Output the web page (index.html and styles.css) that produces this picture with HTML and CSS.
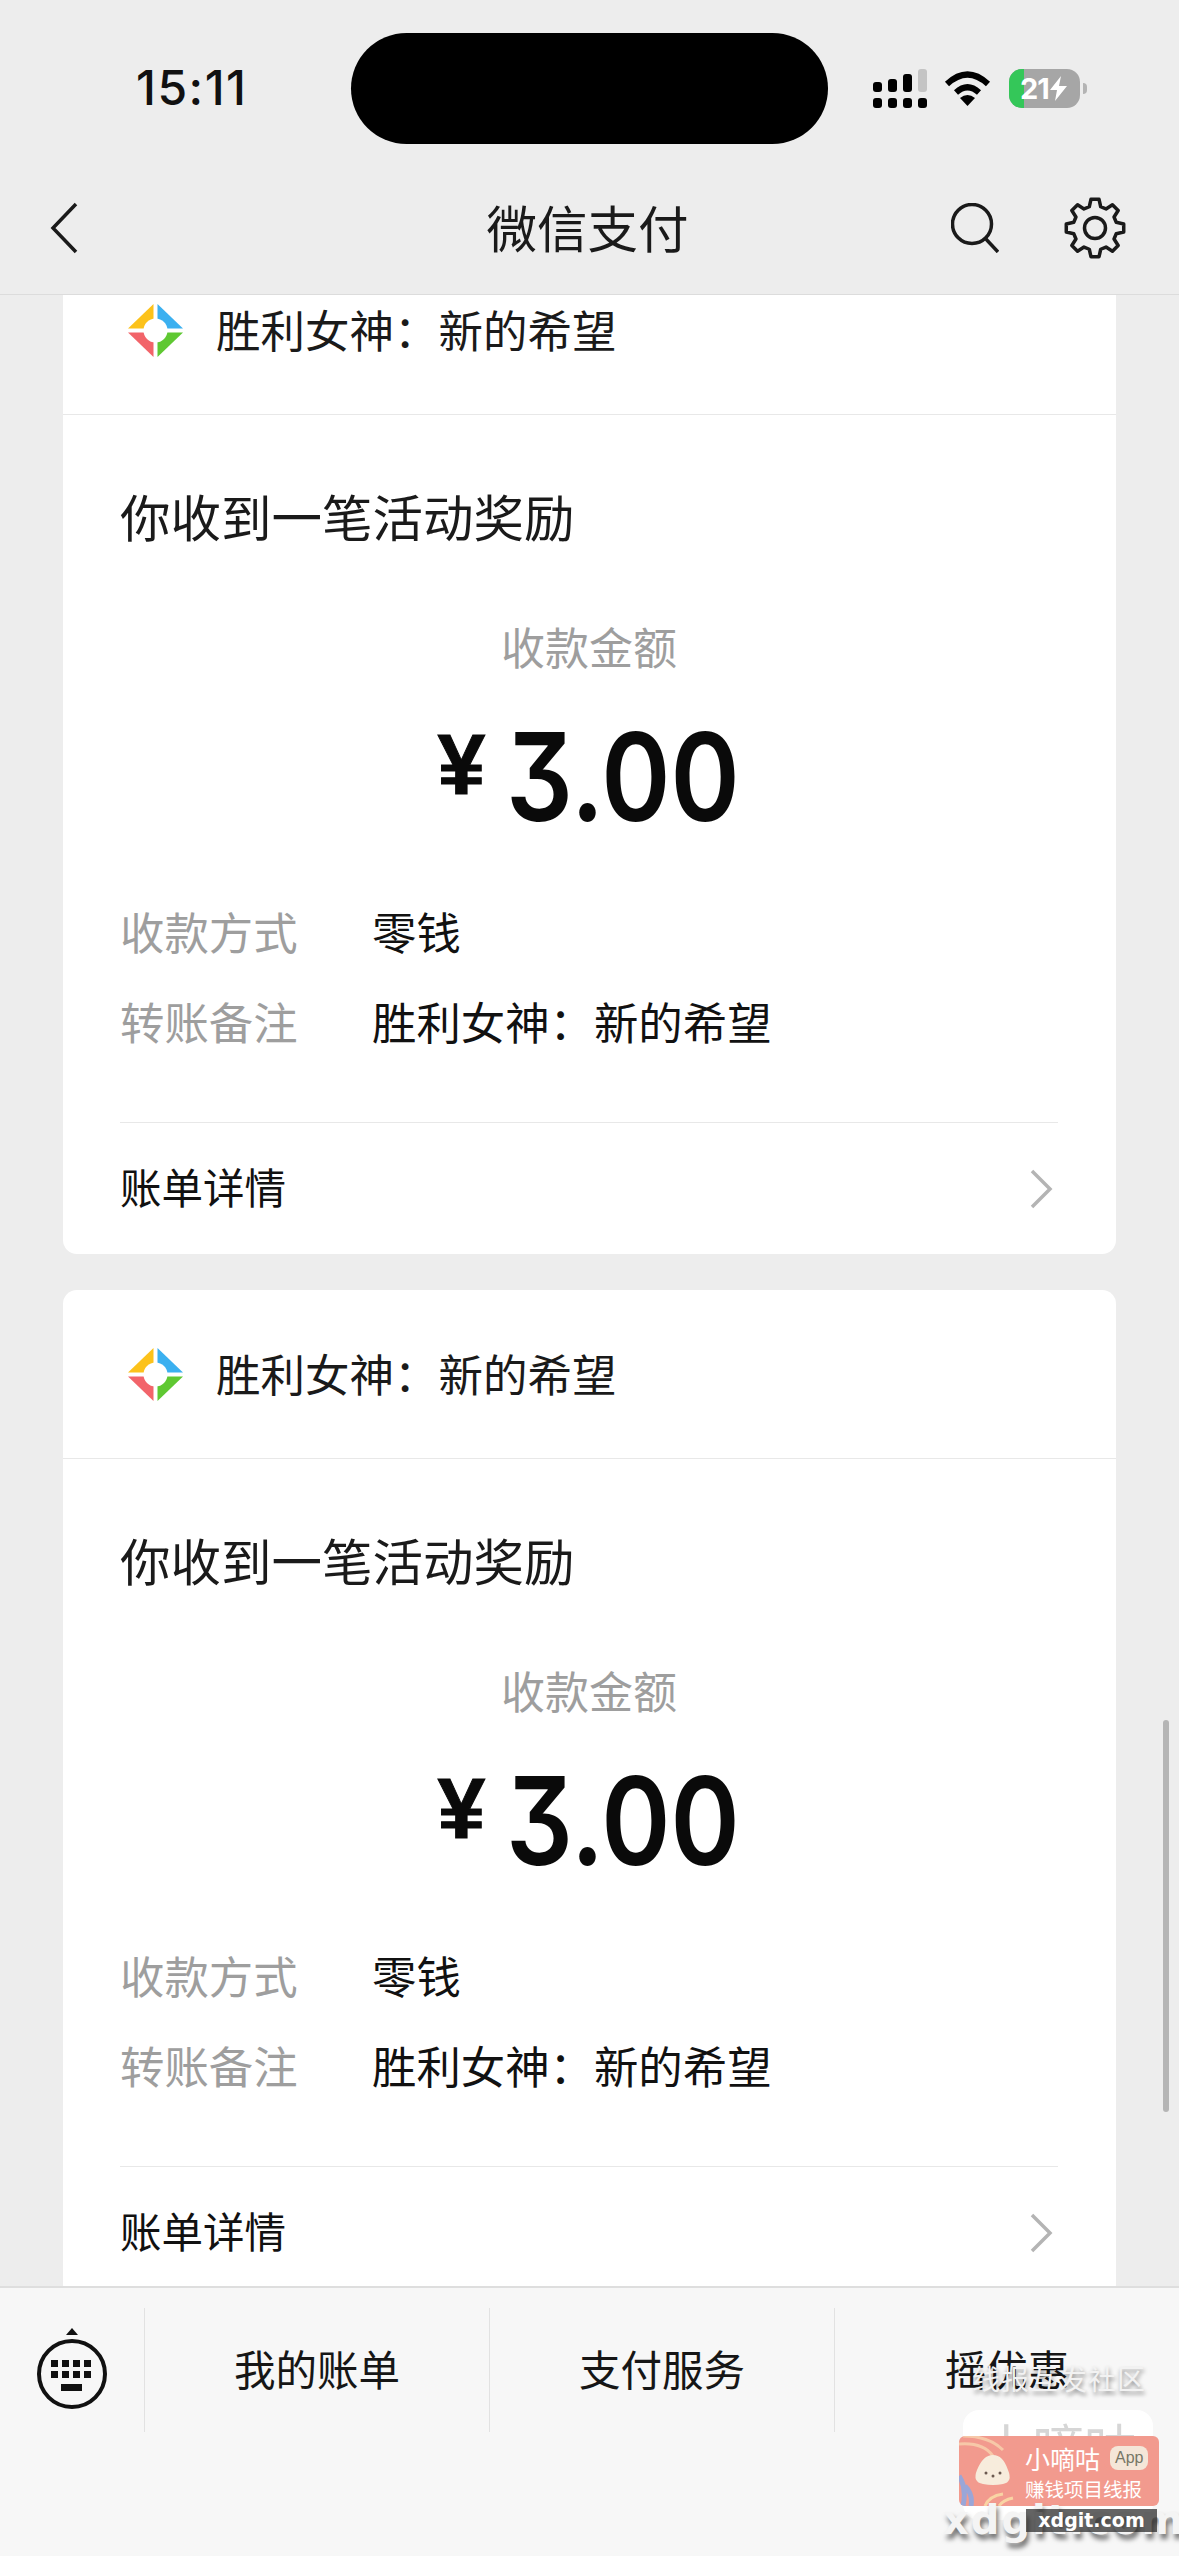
FILE: index.html
```html
<!DOCTYPE html>
<html lang="zh-CN">
<head>
  <meta charset="UTF-8">
  <title>微信支付</title>
  <link rel="stylesheet" href="styles.css">
</head>
<body>
<div class="page">
  <header class="top">
    <div class="status">
      <span class="time">15:11</span>
      <span class="island"></span>
      <div class="status-icons">
        <svg class="signal" width="54" height="39" viewBox="0 0 54 39">
          <rect x="0" y="13" width="9" height="10" rx="3"/>
          <rect x="15" y="10" width="9" height="13" rx="3"/>
          <rect x="30" y="5" width="9" height="18" rx="3"/>
          <rect x="45" y="0" width="9" height="23" rx="3" fill="#c4c4c4"/>
          <rect x="0" y="29" width="9" height="10" rx="3"/>
          <rect x="15" y="29" width="9" height="10" rx="3"/>
          <rect x="30" y="29" width="9" height="10" rx="3"/>
          <rect x="45" y="29" width="9" height="10" rx="3"/>
        </svg>
        <svg class="wifi" width="47" height="35" viewBox="0 0 47 35">
          <path d="M3 13Q23.500 -6 44 13" fill="none" stroke="#000" stroke-width="6"/>
          <path d="M12 21.500Q23.500 11 35 21.500" fill="none" stroke="#000" stroke-width="6"/>
          <path d="M16 27Q23.500 21 31 27L23.500 35Z"/>
        </svg>
        <div class="battery">
          <span class="battery-level"></span>
          <span class="battery-num">21</span>
          <svg class="bolt" width="17" height="25" viewBox="0 0 17 25"><path d="M11 0L0 14H7L5 25L17 10H9Z" fill="#fff"/></svg>
        </div>
        <span class="battery-nub"></span>
      </div>
    </div>
    <nav class="nav">
      <div class="nav-left">
        <svg width="28" height="52" viewBox="0 0 28 52"><path d="M26 2L3 26L26 50" fill="none" stroke="#1a1a1a" stroke-width="3.500"/></svg>
      </div>
      <div class="nav-title">微信支付</div>
      <div class="nav-right">
        <svg width="48" height="50" viewBox="0 0 48 50"><circle cx="21" cy="21" r="19.500" fill="none" stroke="#1a1a1a" stroke-width="3.500"/><path d="M34 35L47 49" stroke="#1a1a1a" stroke-width="3.500"/></svg>
        <svg width="62" height="62" viewBox="-31 -31 62 62">
          <polygon fill="none" stroke="#1a1a1a" stroke-width="3.500" stroke-linejoin="round" points="-5.700,-21.250 -4.040,-28.720 4.040,-28.720 5.700,-21.250 11,-19.050 17.450,-23.160 23.160,-17.450 19.050,-11 21.250,-5.700 28.720,-4.040 28.720,4.040 21.250,5.700 19.050,11 23.160,17.450 17.450,23.160 11,19.050 5.700,21.250 4.040,28.720 -4.040,28.720 -5.700,21.250 -11,19.050 -17.450,23.160 -23.160,17.450 -19.050,11 -21.250,5.700 -28.720,4.040 -28.720,-4.040 -21.250,-5.700 -19.050,-11 -23.160,-17.450 -17.450,-23.160 -11,-19.050"/>
          <circle r="10.500" fill="none" stroke="#1a1a1a" stroke-width="3.500"/>
        </svg>
      </div>
    </nav>
  </header>

  <main class="list">
    <section class="card">
      <div class="card-head">
        <svg class="logo" width="55" height="55" viewBox="0 0 55 55">
          <polygon points="25.500,1 25.500,25.500 0,25.500" fill="#fcc21b"/>
          <polygon points="29.500,1 55,25.500 29.500,25.500" fill="#3bb0f0"/>
          <polygon points="0,29.500 25.500,29.500 25.500,54" fill="#f2646a"/>
          <polygon points="29.500,29.500 55,29.500 29.500,54" fill="#5fc832"/>
          <circle cx="27.500" cy="27.500" r="12" fill="#fff"/>
        </svg>
        <span class="card-name">胜利女神：新的希望</span>
      </div>
      <div class="card-body">
        <h2 class="card-title">你收到一笔活动奖励</h2>
        <div class="amount-label">收款金额</div>
        <div class="amount"><span class="yen">¥</span><span class="num">3.00</span></div>
        <div class="row"><span class="row-label">收款方式</span><span>零钱</span></div>
        <div class="row"><span class="row-label">转账备注</span><span>胜利女神：新的希望</span></div>
        <div class="detail">
          <span>账单详情</span>
          <svg width="24" height="40" viewBox="0 0 24 40"><path d="M3 2L21 20L3 38" fill="none" stroke="#b4b4b4" stroke-width="3.500"/></svg>
        </div>
      </div>
    </section>

    <section class="card">
      <div class="card-head">
        <svg class="logo" width="55" height="55" viewBox="0 0 55 55">
          <polygon points="25.500,1 25.500,25.500 0,25.500" fill="#fcc21b"/>
          <polygon points="29.500,1 55,25.500 29.500,25.500" fill="#3bb0f0"/>
          <polygon points="0,29.500 25.500,29.500 25.500,54" fill="#f2646a"/>
          <polygon points="29.500,29.500 55,29.500 29.500,54" fill="#5fc832"/>
          <circle cx="27.500" cy="27.500" r="12" fill="#fff"/>
        </svg>
        <span class="card-name">胜利女神：新的希望</span>
      </div>
      <div class="card-body">
        <h2 class="card-title">你收到一笔活动奖励</h2>
        <div class="amount-label">收款金额</div>
        <div class="amount"><span class="yen">¥</span><span class="num">3.00</span></div>
        <div class="row"><span class="row-label">收款方式</span><span>零钱</span></div>
        <div class="row"><span class="row-label">转账备注</span><span>胜利女神：新的希望</span></div>
        <div class="detail">
          <span>账单详情</span>
          <svg width="24" height="40" viewBox="0 0 24 40"><path d="M3 2L21 20L3 38" fill="none" stroke="#b4b4b4" stroke-width="3.500"/></svg>
        </div>
      </div>
    </section>
    <span class="scrollbar"></span>
  </main>

  <footer class="menu">
    <div class="menu-kb">
      <svg width="70" height="82" viewBox="0 0 70 82">
        <path d="M35 0L41 7H29Z" fill="#111"/>
        <circle cx="35" cy="46" r="33" fill="none" stroke="#111" stroke-width="4"/>
        <g fill="#111">
          <rect x="14" y="32" width="7" height="7"/><rect x="25" y="32" width="7" height="7"/><rect x="36" y="32" width="7" height="7"/><rect x="47" y="32" width="7" height="7"/>
          <rect x="14" y="43" width="7" height="7"/><rect x="25" y="43" width="7" height="7"/><rect x="36" y="43" width="7" height="7"/><rect x="47" y="43" width="7" height="7"/>
          <rect x="24" y="56" width="21" height="7"/>
        </g>
      </svg>
    </div>
    <div class="menu-item">我的账单</div>
    <div class="menu-item">支付服务</div>
    <div class="menu-item">摇优惠</div>
  </footer>

  <div class="wm">
    <div class="wm-top">线报互发社区</div>
    <div class="wm-white">小嘀咕</div>
    <div class="wm-banner">
      <svg class="wm-art" width="200" height="70" viewBox="0 0 200 70">
        <path d="M0 8Q24 6 34 20M4 0Q30 0 44 14" fill="none" stroke="#f7c8a8" stroke-width="3"/>
        <path d="M0 40Q8 52 4 70M12 70Q14 58 6 50" fill="none" stroke="#9aa6d8" stroke-width="5"/>
        <path d="M26 70Q30 60 44 58M40 70Q44 64 54 62" fill="none" stroke="#f9d4a4" stroke-width="3"/>
        <path d="M34 19Q44 19 49 34Q54 46 44 48Q34 50 24 48Q13 46 18 34Q24 19 34 19Z" fill="#f7ecdc"/>
        <circle cx="27" cy="37" r="1.500" fill="#6b5a50"/><circle cx="41" cy="37" r="1.500" fill="#6b5a50"/><circle cx="34" cy="40" r="1.500" fill="#6b5a50"/>
      </svg>
      <div class="wm-brand">小嘀咕<span class="wm-app">App</span></div>
      <div class="wm-sub">赚钱项目线报</div>
    </div>
    <div class="wm-big">xdgit.com</div>
    <div class="wm-tag">xdgit.com</div>
  </div>
</div>
</body>
</html>
```

FILE: styles.css
```css
* {
  box-sizing: border-box;
}

body {
  margin: 0;
  background: #ededed;
  font-family: "Noto Sans CJK SC", "Liberation Sans", sans-serif;
  color: #1a1a1a;
}

.page {
  position: relative;
  width: 1179px;
  height: 2556px;
  overflow: hidden;
  display: flex;
  flex-direction: column;
}

/* top bar */
.top {
  height: 295px;
  flex: none;
  background: #ededed;
  border-bottom: 1px solid #dcdcdc;
  position: relative;
  z-index: 2;
}

.status {
  display: flex;
  align-items: center;
  height: 111px;
  margin-top: 33px;
  padding-left: 136px;
}

.time {
  width: 215px;
  font: 500 48px/1 Inter, "Liberation Sans", sans-serif;
  letter-spacing: 1.500px;
  color: #111;
  position: relative;
  top: -1px;
}

.island {
  width: 477px;
  height: 111px;
  background: #000;
  border-radius: 56px;
}

.status-icons {
  margin-left: 45px;
  display: flex;
  align-items: center;
}

.wifi {
  margin-left: 17px;
}

.battery {
  position: relative;
  margin-left: 18px;
  width: 71px;
  height: 39px;
  border-radius: 13px;
  background: #a6a6a6;
  overflow: hidden;
  display: flex;
  align-items: center;
  padding-left: 11px;
}

.battery-level {
  position: absolute;
  left: 0;
  top: 0;
  bottom: 0;
  width: 15px;
  background: #34c759;
}

.battery-num {
  position: relative;
  font: 700 29px/1 Inter, "Liberation Sans", sans-serif;
  letter-spacing: -1px;
  color: #fff;
}

.bolt {
  position: relative;
  margin-left: 1px;
}

.battery-nub {
  width: 4px;
  height: 11px;
  margin-left: 3px;
  background: #b4b4b4;
  border-radius: 0 4px 4px 0;
}

.nav {
  display: grid;
  grid-template-columns: 1fr auto 1fr;
  align-items: center;
  height: 124px;
  margin-top: 22px;
}

.nav-left {
  padding-left: 50px;
  display: flex;
}

.nav-title {
  font-size: 50.500px;
  line-height: 70px;
  position: relative;
  left: -2px;
  top: -2px;
}

.nav-right {
  display: flex;
  align-items: center;
  justify-content: flex-end;
  gap: 65px;
  padding-right: 53px;
}

/* cards */
.list {
  position: relative;
  flex: 1;
  min-height: 0;
  overflow: hidden;
  padding: 0 63px;
}

.card {
  height: 1008px;
  margin-bottom: 36px;
  background: #fff;
  border-radius: 14px;
}

.card:first-child {
  margin-top: -49px;
}

.card-head {
  height: 169px;
  display: flex;
  align-items: center;
  padding-left: 65px;
  border-bottom: 1px solid #e8e8e8;
}

.card-name {
  margin: 0 0 3px 33px;
  font-size: 44.500px;
  line-height: 60px;
}

.card-body {
  padding: 0 58px 0 57px;
}

.card-title {
  margin: 65px 0 0;
  font-size: 50.500px;
  font-weight: 400;
  line-height: 70px;
}

.amount-label {
  margin-top: 66px;
  text-align: center;
  font-size: 44px;
  line-height: 60px;
  color: #9e9e9e;
}

.amount {
  margin-top: 36px;
  height: 130px;
  display: flex;
  justify-content: center;
  align-items: center;
  color: #0a0a0a;
}

.yen {
  font: 700 86px/1 "Liberation Sans", sans-serif;
  -webkit-text-stroke: 1px #0a0a0a;
  margin-right: 21px;
  position: relative;
  top: -13px;
}

.num {
  display: inline-block;
  width: 234px;
  white-space: nowrap;
  font: 600 122px/130px Inter, "Liberation Sans", sans-serif;
  font-feature-settings: "cv09";
  transform: scaleX(.86);
  transform-origin: 0 50%;
}

.row {
  display: flex;
  font-size: 44.400px;
  line-height: 60px;
  color: #111;
  margin-top: 30px;
  position: relative;
  top: -3px;
}

.amount + .row {
  margin-top: 62px;
}

.row-label {
  width: 252px;
  color: #9e9e9e;
}

.detail {
  margin-top: 68px;
  height: 132px;
  border-top: 1px solid #e8e8e8;
  display: flex;
  align-items: center;
  justify-content: space-between;
  padding-right: 5px;
  font-size: 41.500px;
  color: #111;
}

.detail span {
  position: relative;
  top: -3px;
}

.scrollbar {
  position: absolute;
  left: 1163px;
  top: 1425px;
  width: 6px;
  height: 392px;
  border-radius: 3px;
  background: #b5b5b5;
}

/* bottom menu */
.menu {
  height: 270px;
  flex: none;
  display: flex;
  align-items: flex-start;
  padding-top: 20px;
  background: #f7f7f7;
  border-top: 2px solid #dedede;
  position: relative;
  z-index: 2;
}

.menu-kb {
  width: 144px;
  height: 124px;
  padding: 20px 0 0 37px;
}

.menu-item {
  width: 345px;
  height: 124px;
  border-left: 1px solid #e2e2e2;
  text-align: center;
  font-size: 41.500px;
  line-height: 120px;
  color: #161616;
}

/* site watermark */
.wm {
  position: absolute;
  left: 940px;
  top: 2360px;
  width: 239px;
  height: 190px;
  z-index: 3;
}

.wm-top {
  position: absolute;
  left: 32px;
  top: 0;
  font-size: 28px;
  line-height: 36px;
  letter-spacing: 1px;
  color: #f2f2f2;
  text-shadow: 1px 3px 4px rgba(0, 0, 0, .45);
  white-space: nowrap;
}

.wm-white {
  position: absolute;
  left: 23px;
  top: 50px;
  width: 190px;
  height: 110px;
  border-radius: 16px;
  background: #fff;
  text-align: center;
  font-size: 52px;
  line-height: 72px;
  white-space: nowrap;
  color: #d6d6d6;
}

.wm-banner {
  position: absolute;
  left: 19px;
  top: 76px;
  width: 200px;
  height: 70px;
  border-radius: 6px;
  background: #f29a8e;
  overflow: hidden;
  padding: 6px 0 0 66px;
  color: #fff;
}

.wm-art {
  position: absolute;
  left: 0;
  top: 0;
}

.wm-brand {
  position: relative;
  display: flex;
  align-items: center;
  font-size: 25px;
  line-height: 32px;
  white-space: nowrap;
}

.wm-app {
  margin-left: 10px;
  padding: 0 5px;
  border-radius: 8px;
  background: #f4e6d8;
  font: 500 16px/24px "Liberation Sans", sans-serif;
  color: #776;
}

.wm-sub {
  position: relative;
  margin-top: 3px;
  font-size: 19.500px;
  line-height: 24px;
  white-space: nowrap;
}

.wm-big {
  position: absolute;
  left: 3px;
  top: 140px;
  font: 700 40px/40px "DejaVu Sans", sans-serif;
  letter-spacing: 2px;
  color: #f4f4f4;
  text-shadow: 2px 5px 5px rgba(0, 0, 0, .55);
  white-space: nowrap;
}

.wm-tag {
  position: absolute;
  left: 86px;
  top: 149px;
  width: 131px;
  height: 23px;
  background: rgba(40, 40, 40, .72);
  text-align: center;
  font: 700 19px/23px "DejaVu Sans", sans-serif;
  color: #fff;
}
```
